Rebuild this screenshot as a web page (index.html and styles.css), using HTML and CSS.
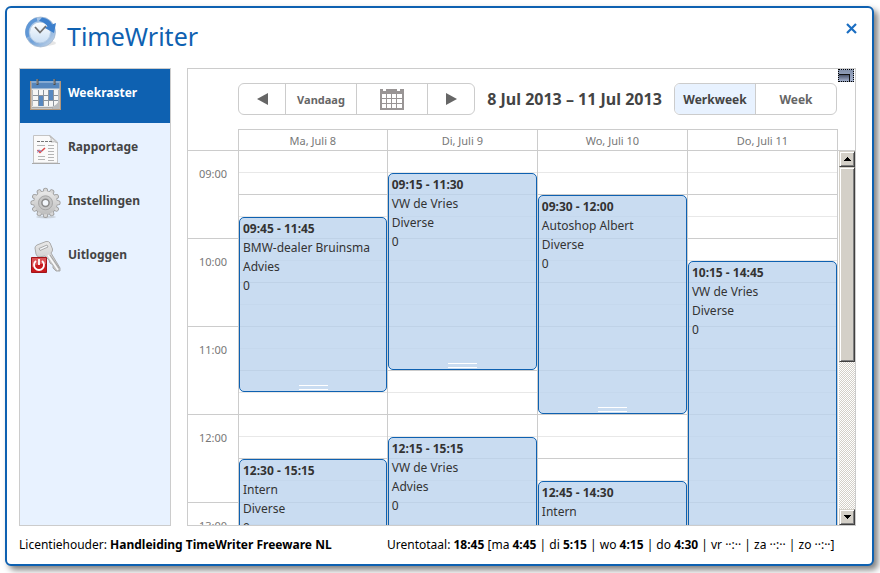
FILE: index.html
```html
<!DOCTYPE html>
<html lang="nl">
<head>
	<meta charset="utf-8">
	<title>TimeWriter</title>
	<link rel="stylesheet" href="styles.css">
</head>

<body>

<div class="window">
	<header class="titlebar">
		<svg class="logo" width="32" height="34" viewBox="0 0 32 34">
			<defs>
				<linearGradient id="ring" x1="0" y1="0" x2="1" y2="1">
					<stop offset="0" stop-color="#d9e6f4"/>
					<stop offset=".5" stop-color="#6d9fd8"/>
					<stop offset="1" stop-color="#d5e0ec"/>
				</linearGradient>
				<linearGradient id="dial" x1="0" y1="0" x2="0" y2="1">
					<stop offset="0" stop-color="#ffffff"/>
					<stop offset="1" stop-color="#c9def4"/>
				</linearGradient>
			</defs>
			<ellipse cx="20" cy="28" rx="11" ry="3" fill="#e6e6e6"/>
			<circle cx="15.500" cy="17" r="15" fill="url(#ring)" stroke="#a5b9cf" stroke-width=".8"/>
			<path d="M3 22A13 13 0 0 1 12 4.500" fill="none" stroke="#5f97d6" stroke-width="3.500"/>
			<circle cx="15" cy="17.500" r="10.500" fill="url(#dial)" stroke="#b4cbe4"/>
			<path d="M17 2.500Q25 4 27 9.500L31 8L29 18L19 12.500L22.500 11.500Q20 7 14 6Z" fill="#3c7fcc"/>
			<path d="M10 12L15 17.500L21 11" fill="none" stroke="#707070" stroke-width="1.800"/>
		</svg>
		<h1>TimeWriter</h1>
		<button class="close" type="button" aria-label="Sluiten">
			<svg width="11" height="11" viewBox="0 0 11 11"><path d="M1 1L10 10M10 1L1 10" stroke="#1b6ec2" stroke-width="2.2"/></svg>
		</button>
	</header>

	<div class="content">
		<nav class="menu">
			<a class="active" href="#weekraster">
				<svg width="32" height="32" viewBox="0 0 32 32">
					<path d="M0 2H31V31H0Z" fill="#b3967a"/>
					<path d="M1.500 2H29.500V30H1.500Z" fill="#e4e6e8"/>
					<path d="M1.500 2H29.500V9.500H1.500Z" fill="#5586bd"/>
					<path d="M1.500 2H29.500V4H1.500Z" fill="#86aad2"/>
					<path d="M2.500 11H28.500V27H2.500Z" fill="#8d949d"/>
					<g fill="#f6f6f6">
						<path d="M3 11h5v5H3zM9 11h4v5H9zM14 11h4v5h-4zM24 11h4v5h-4z"/>
						<path d="M3 17h5v4H3zM14 17h4v4h-4zM24 17h4v4h-4z"/>
						<path d="M3 22h5v5H3zM14 22h4v5h-4zM19 22h4v5h-4zM24 22h4v5h-4z"/>
					</g>
					<path d="M19 11h4v10h-4zM9 17h4v10H9z" fill="#5788c1"/>
					<path d="M22 28Q27 26 29.500 21V30H22Z" fill="#b9bbbd"/>
					<path d="M2 28H23V29.500H2Z" fill="#aaa"/>
					<path d="M7.500 0V6M24.500 0V6" stroke="#4d4d4d" stroke-width="2"/>
					<path d="M7 0V5M24 0V5" stroke="#bbb" stroke-width=".700"/>
				</svg>
				<span>Weekraster</span>
			</a>
			<a href="#rapportage">
				<svg width="32" height="32" viewBox="0 0 32 32">
					<path d="M3.500 2.500H20L27.500 9V30H3.500Z" fill="#fafafa" stroke="#c4c4c4"/>
					<path d="M19.500 2.500Q22 5 21 9Q25 8 27.500 10Z" fill="#e8e8e8" stroke="#bbb"/>
					<path d="M2 30.500H30" stroke="#aaa"/>
					<path d="M7 8.500H23" stroke="#777" stroke-dasharray="3 1"/>
					<path d="M7 12.500H15M18 12.500H24M18 15.500H24M18 18.500H24M18 21.500H24M8 23.500H15M18 24.500H24M8 26.500H15M18 27.500H24" stroke="#b5b5b5"/>
					<path d="M7.500 17L10 19.500L15 15" fill="none" stroke="#e04848" stroke-width="1.600"/>
					<path d="M7.500 19.500L9 17L12 18.500" fill="none" stroke="#7c87c4"/>
				</svg>
				<span>Rapportage</span>
			</a>
			<a href="#instellingen">
				<svg width="32" height="32" viewBox="0 0 32 32">
					<defs>
						<linearGradient id="metal" x1="0" y1="0" x2="0" y2="1">
							<stop offset="0" stop-color="#e9e9e9"/>
							<stop offset="1" stop-color="#bdbdbd"/>
						</linearGradient>
					</defs>
					<ellipse cx="16" cy="30" rx="10" ry="1.500" fill="#cbd3dc"/>
					<g fill="none" stroke="#9c9c9c" stroke-width="5" stroke-linecap="round">
						<path d="M15.500 3.200V28.400M2.900 15.800H28.100M9.200 4.900L21.800 26.700M21.800 4.900L9.200 26.700M4.600 9.500L26.400 22.100M26.400 9.500L4.600 22.100"/>
					</g>
					<circle cx="15.500" cy="15.800" r="12.200" fill="#9c9c9c"/>
					<g fill="none" stroke="#d6d6d6" stroke-width="3.400" stroke-linecap="round">
						<path d="M15.500 3.200V28.400M2.900 15.800H28.100M9.200 4.900L21.800 26.700M21.800 4.900L9.200 26.700M4.600 9.500L26.400 22.100M26.400 9.500L4.600 22.100"/>
					</g>
					<circle cx="15.500" cy="15.800" r="11.500" fill="url(#metal)"/>
					<circle cx="15.500" cy="15.800" r="7" fill="#c6c6c6" stroke="#a6a6a6"/>
					<circle cx="15.500" cy="15.800" r="3.600" fill="#f3f7fc" stroke="#8a8a8a" stroke-width="1.500"/>
				</svg>
				<span>Instellingen</span>
			</a>
			<a href="#uitloggen">
				<svg width="32" height="32" viewBox="0 0 32 32">
					<path d="M5 7Q5 5 7 4L16 .500Q19 0 20 2L22.500 8Q23 10 21 12L30 27L30 30L26 30L23 27V24L20 22L19 19L15 15L9 16Q7 16 6 13Z" fill="url(#metal)" stroke="#aaa"/>
					<path d="M9 7.500L17 4L18 6L10 9.500Z" fill="#f3f6fa" stroke="#999" stroke-width=".800"/>
					<path d="M18 14L28 29" stroke="#fafafa" stroke-width="1.500"/>
					<path d="M20 14L29 27" stroke="#999" stroke-width=".800"/>
					<path d="M1.500 16.500H16.500V31.500H1.500Z" fill="#c8191e" stroke="#a2151a"/>
					<path d="M2 17H16V23Q9 22 2 26Z" fill="#dc5558"/>
					<path d="M6 20A5 5 0 1 0 12 20M9 18V24" fill="none" stroke="#fff" stroke-width="1.800"/>
				</svg>
				<span>Uitloggen</span>
			</a>
		</nav>

		<main class="planner">
			<button class="expand" type="button" aria-label="Volledig scherm"></button>

			<div class="toolbar">
				<div class="group nav-group">
					<button type="button" aria-label="Vorige"><svg width="11" height="12" viewBox="0 0 11 12"><path d="M0 6L11 0V12Z" fill="#666"/></svg></button>
					<button type="button">Vandaag</button>
					<button type="button" aria-label="Kalender">
						<svg width="24" height="22" viewBox="0 0 24 22">
							<path d="M0 1H3V3H6V1H17V3H20V1H24V22H0Z" fill="#999595"/>
							<path d="M2 6h4v4H2zM7 6h4v4H7zM12 6h4v4h-4zM17 6h5v4h-5zM2 11h4v4H2zM7 11h4v4H7zM12 11h4v4h-4zM17 11h5v4h-5zM2 16h4v4H2zM7 16h4v4H7zM12 16h4v4h-4zM17 16h5v4h-5z" fill="#fff"/>
						</svg>
					</button>
					<button type="button" aria-label="Volgende"><svg width="11" height="12" viewBox="0 0 11 12"><path d="M11 6L0 0V12Z" fill="#666"/></svg></button>
				</div>
				<h2>8 Jul 2013 – 11 Jul 2013</h2>
				<div class="group view-group">
					<button class="selected" type="button">Werkweek</button>
					<button type="button">Week</button>
				</div>
			</div>

			<div class="days-head">
				<div class="days">
					<div>Ma, Juli 8</div>
					<div>Di, Juli 9</div>
					<div>Wo, Juli 10</div>
					<div>Do, Juli 11</div>
				</div>
			</div>

			<div class="schedule">
				<div class="hours">
					<div>09:00</div>
					<div>10:00</div>
					<div>11:00</div>
					<div>12:00</div>
					<div>13:00</div>
				</div>
				<div class="days">
					<div class="day">
						<article class="event from-0945 to-1145">
							<b>09:45 - 11:45</b>
							<p>BMW-dealer Bruinsma</p>
							<p>Advies</p>
							<p>0</p>
						</article>
						<article class="event from-1230 to-1515">
							<b>12:30 - 15:15</b>
							<p>Intern</p>
							<p>Diverse</p>
							<p>0</p>
						</article>
					</div>
					<div class="day">
						<article class="event from-0915 to-1130">
							<b>09:15 - 11:30</b>
							<p>VW de Vries</p>
							<p>Diverse</p>
							<p>0</p>
						</article>
						<article class="event from-1215 to-1515">
							<b>12:15 - 15:15</b>
							<p>VW de Vries</p>
							<p>Advies</p>
							<p>0</p>
						</article>
					</div>
					<div class="day">
						<article class="event from-0930 to-1200">
							<b>09:30 - 12:00</b>
							<p>Autoshop Albert</p>
							<p>Diverse</p>
							<p>0</p>
						</article>
						<article class="event from-1245 to-1430">
							<b>12:45 - 14:30</b>
							<p>Intern</p>
						</article>
					</div>
					<div class="day">
						<article class="event from-1015 to-1445">
							<b>10:15 - 14:45</b>
							<p>VW de Vries</p>
							<p>Diverse</p>
							<p>0</p>
						</article>
					</div>
				</div>
				<div class="scrollbar">
					<button type="button" aria-label="Omhoog"><svg width="7" height="4" viewBox="0 0 7 4"><path d="M3 0h1v1h1v1h1v1h1v1H0V3h1V2h1V1h1z"/></svg></button>
					<div class="track"><div class="thumb"></div></div>
					<button type="button" aria-label="Omlaag"><svg width="7" height="4" viewBox="0 0 7 4"><path d="M0 0h7v1H6v1H5v1H4v1H3V3H2V2H1V1H0z"/></svg></button>
				</div>
			</div>
		</main>
	</div>

	<footer class="status">
		<div class="licence">Licentiehouder: <b>Handleiding TimeWriter Freeware NL</b></div>
		<div>Urentotaal: <b>18:45</b> [ma <b>4:45</b> | di <b>5:15</b> | wo <b>4:15</b> | do <b>4:30</b> | vr ··:·· | za ··:·· | zo ··:··]</div>
	</footer>
</div>

</body>

</html>
```

FILE: styles.css
```css
* {
	box-sizing: border-box;
}

body {
	display: flex;
	height: 100vh;
	margin: 0;
	padding: 6px 6px 7px 5px;
	font-family: "Noto Sans", "Open Sans", sans-serif;
	font-size: 12px;
	color: #000;
	background: #fff;
}

h1,
h2,
p {
	margin: 0;
}

button {
	margin: 0;
	padding: 0;
	border: 0;
	font: inherit;
	color: inherit;
	background: none;
}

svg {
	display: block;
}

.window {
	flex: 1;
	display: flex;
	flex-direction: column;
	min-width: 0;
	padding: 0 16px 0 12px;
	border: 2px solid #0e61b1;
	border-radius: 6px;
	background: #fff;
	box-shadow: 4px 4px 6px rgba(0, 0, 0, 0.5);
}

.titlebar {
	display: flex;
	align-items: center;
	gap: 10px;
	height: 60px;
	padding: 0 0 12px 6px;
}

.titlebar h1 {
	flex: 1;
	padding-top: 8px;
	font-size: 25px;
	font-weight: normal;
	line-height: 32px;
	color: #0e61b1;
}

.close {
	margin: 0 -1px 8px 0;
}

.content {
	flex: 1;
	display: flex;
	gap: 16px;
	min-height: 0;
}

/* left menu */

.menu {
	width: 152px;
	border: 1px solid #ccc;
	background: #e8f2ff;
}

.menu a {
	display: flex;
	gap: 6px;
	height: 54px;
	padding: 10px 0 0 10px;
	font-size: 12px;
	font-weight: bold;
	line-height: 28px;
	color: #444;
	text-decoration: none;
}

.menu a.active {
	color: #fff;
	background: #0e61b1;
}

/* planner */

.planner {
	position: relative;
	flex: 1;
	display: flex;
	flex-direction: column;
	min-width: 0;
	border: 1px solid #ccc;
}

.expand {
	position: absolute;
	top: 0;
	right: 1px;
	width: 16px;
	height: 13px;
	border: 1px dotted #000;
	background: linear-gradient(#111, #111) 0 4px / 11px 1px no-repeat, linear-gradient(#111, #111) 10px 4px / 1px 7px no-repeat, linear-gradient(#4a546c, #a3b0cc) 0 5px / 10px 6px no-repeat, linear-gradient(#8391ab, #a3b0cc);
}

.toolbar {
	display: flex;
	align-items: center;
	justify-content: space-between;
	padding: 14px 18px 14px 50px;
}

.toolbar h2 {
	font-size: 16px;
	line-height: 32px;
	color: #444;
}

.group {
	display: grid;
	height: 32px;
	border: 1px solid #ccc;
	border-radius: 6px;
	overflow: hidden;
	font-weight: bold;
	color: #666;
}

.nav-group {
	grid-template-columns: 46px 71px 71px 47px;
	font-size: 11px;
}

.view-group {
	grid-template-columns: 80px 81px;
}

.group button {
	display: flex;
	align-items: center;
	justify-content: center;
}

.group button + button {
	border-left: 1px solid #ccc;
}

.group .selected {
	color: #444;
	background: #e8f2ff;
}

.days-head {
	padding: 0 17px 0 50px;
	border-bottom: 1px solid #ccc;
}

.days {
	display: grid;
	grid-template-columns: calc(25% - 1px) 1fr 1fr 1fr;
}

.days > div {
	border-right: 1px solid #ccc;
}

.days-head .days {
	border-top: 1px solid #ccc;
	border-left: 1px solid #ccc;
	font-size: 11px;
	line-height: 21px;
	height: 21px;
	text-align: center;
	color: #777;
}

.schedule {
	flex: 1;
	display: flex;
	min-height: 0;
	overflow: hidden;
}

.hours {
	width: 51px;
	border-right: 1px solid #ccc;
	font-size: 11px;
	line-height: 46px;
	text-align: center;
	color: #777;
}

.hours div {
	height: 88px;
	border-bottom: 1px solid #ccc;
}

/* one quarter of an hour is 22px high */

.schedule .days {
	flex: 1;
	background: repeating-linear-gradient(transparent 0 21px, #e8e8e8 21px 22px, transparent 22px 43px, #ccc 43px 44px);
}

.day {
	position: relative;
	min-width: 0;
}

.event {
	position: absolute;
	left: 0;
	right: 0;
	padding: 1px 3px;
	border: 1px solid #0e61b1;
	border-radius: 5px;
	font-size: 12px;
	line-height: 19px;
	white-space: nowrap;
	color: #333;
	background: rgba(187, 211, 237, 0.8);
}

.event::after {
	content: "";
	position: absolute;
	bottom: 1px;
	left: calc(50% - 14px);
	width: 29px;
	height: 3px;
	border: solid #fff;
	border-width: 1px 0;
}

.from-0915 { top: 22px; }
.from-0930 { top: 44px; }
.from-0945 { top: 66px; }
.from-1015 { top: 110px; }
.from-1215 { top: 286px; }
.from-1230 { top: 308px; }
.from-1245 { top: 330px; }

.from-0915.to-1130 { height: 197px; }
.from-0930.to-1200 { height: 219px; }
.from-0945.to-1145 { height: 175px; }
.from-1015.to-1445 { height: 395px; }
.from-1215.to-1515 { height: 263px; }
.from-1230.to-1515 { height: 241px; }
.from-1245.to-1430 { height: 153px; }

/* scrollbar */

.scrollbar {
	display: flex;
	flex-direction: column;
	width: 16px;
	margin: 0 0 0 1px;
}

.scrollbar button,
.thumb {
	border: 1px solid;
	border-color: #d4d0c8 #404040 #404040 #d4d0c8;
	background: #d4d0c8;
	box-shadow: inset 1px 1px #fff, inset -1px -1px #808080;
}

.scrollbar button {
	display: flex;
	align-items: center;
	justify-content: center;
	height: 16px;
}

.track {
	flex: 1;
	background: repeating-conic-gradient(#d4d0c8 0 25%, #fff 0 50%) 0 0 / 2px 2px;
}

.thumb {
	height: 57%;
}

/* footer */

.status {
	display: flex;
	height: 38px;
	line-height: 38px;
	white-space: nowrap;
}

.licence {
	flex: 0 0 368px;
}
```
